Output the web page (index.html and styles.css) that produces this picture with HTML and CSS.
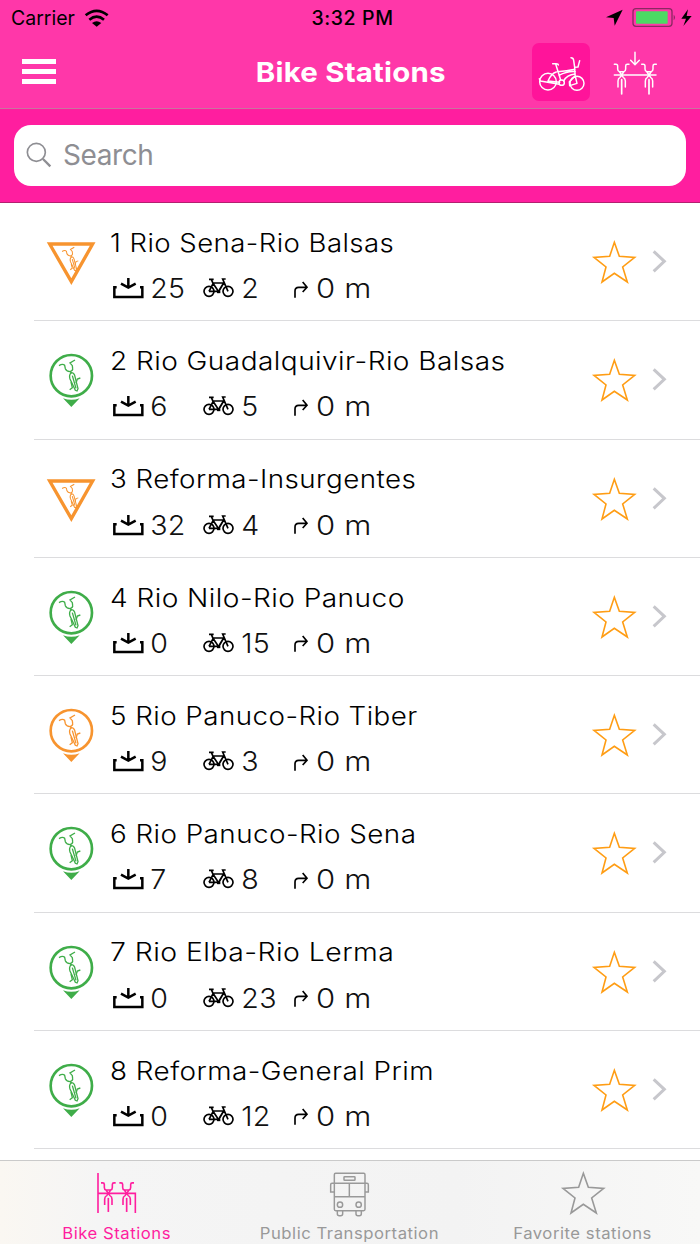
FILE: index.html
```
<!DOCTYPE html>
<html lang="en">
<head>
<meta charset="utf-8">
<title>Bike Stations</title>
<link rel="stylesheet" href="styles.css">
</head>
<body>
<svg class="sprites" aria-hidden="true">
  <symbol id="pin" viewBox="21 33 144 174">
    <circle cx="94" cy="107" r="62" stroke-width="8"/>
    <path class="solid" d="M69 175Q94 184 119 175L94 201Z"/>
    <use href="#pinbike"/>
  </symbol>
  <symbol id="tri" viewBox="21 33 144 174">
    <path d="M29 66H158L94 179Z" stroke-width="10"/>
    <use href="#pinbike" transform="translate(23 30) scale(.76)"/>
  </symbol>
  <g id="pinbike" stroke-width="4">
    <path d="M57 77Q68 70 74 76L76 86Q79 93 90 95Q99 92 98 86L97 77L90 69L105 60M91 94L94 100"/>
    <path d="M94 98Q86 104 90 117L106 151L111 153L114 146L104 106Q101 98 94 98Z"/>
    <path stroke-width="4" d="M97 107L108 145M93 126L97 143L89 149M108 129L112 117L121 114"/>
  </g>
  <symbol id="dock" viewBox="216 153 102 66">
    <path d="M230 184H223V213H307V184H300M265 156V184M243 173L265 185L287 173" stroke-width="7.5"/>
  </symbol>
  <symbol id="bike" viewBox="486 156 99 66">
    <g stroke-width="5"><circle cx="507" cy="199" r="15"/><circle cx="564" cy="199" r="15"/>
    <path d="M507 199L520 174H551L536 200L519 175L514 163M507 163H521M507 199H536M564 199L548 162H557M551 174L538 195"/><path d="M531 201H541" stroke-width="7"/></g>
  </symbol>
  <symbol id="turn" viewBox="276 162 51 57">
    <path d="M285 215V195Q285 184 296 184H320M308 168L321 184L308 198" stroke-width="5"/>
  </symbol>
  <symbol id="star" viewBox="36 30 135 135">
    <path d="M103 37L118 79L164 82L128 111L142 156L103 130L66 156L78 111L42 82L89 79Z" stroke-width="4.8"/>
  </symbol>
  <symbol id="chev" viewBox="216 60 45 69"><path d="M221 64L253 94L221 124" stroke-width="9"/></symbol>
  <g id="rackbike">
    <path d="M-22-32H-17Q-12-32-12-27V-18Q-12-12-7-10L0 0L7-10Q12-12 12-18V-27Q12-32 17-32H22M-7-10H7M-11 36V18Q-11 10-5 7L0 0L5 7Q11 10 11 18V36"/>
    <path d="M0 14V57" stroke-width="5"/>
  </g>
</svg>

<header>
  <div class="status">
    <span class="carrier">Carrier</span>
    <svg class="wifi" viewBox="252 24 75 54"><g stroke="#000" stroke-width="8" fill="none"><path d="M257 43Q290 16 323 43M268 56Q290 38 312 56"/></g><path d="M276 66Q290 56 304 66L290 77Z"/></svg>
    <span class="clock">3:32 PM</span>
    <svg class="power" viewBox="764 20 264 60">
      <path d="M817 28L767 51L790 53L793 76Z"/>
      <rect x="848" y="25" width="117" height="53" rx="9" fill="none" stroke="#8b2862" stroke-width="4"/>
      <rect x="857" y="33" width="95" height="37" rx="2" fill="#4cd964"/>
      <path d="M970 43Q978 51 970 60Z" fill="#8b2862"/>
      <path d="M1013 27L993 55H1007L999 77L1024 47H1009Z"/>
    </svg>
  </div>
  <div class="nav">
    <div class="burger"><i></i><i></i><i></i></div>
    <h1><span>Bike Stations</span></h1>
    <div class="toggle on"><svg viewBox="36 21 174 174"><g stroke-width="4.4">
      <circle cx="84" cy="137" r="25"/><circle cx="171" cy="142" r="21"/><circle cx="125" cy="140" r="8"/>
      <path d="M98 83H108Q115 83 115 87M107 84L122 132M113 107Q140 105 165 100M117 118Q142 105 166 107M109 108Q94 112 84 135L119 139M61 135L58 128M61 135L118 145M131 135Q140 116 166 114M153 65Q160 65 161 73L164 94L174 93L179 74M164 94L165 117L171 142L149 149L148 137L166 120"/></g></svg></div>
    <div class="toggle"><svg viewBox="258 21 174 174"><g stroke-width="4.4"><path d="M345 49V85M332 73L345 86L358 73M283 117H408"/><use href="#rackbike" x="305" y="117"/><use href="#rackbike" x="387" y="117"/></g></svg></div>
  </div>
</header>

<div class="searchbar"><div class="field"><svg viewBox="78 126 78 78"><circle cx="109" cy="157" r="27" stroke-width="5"/><path d="M129 177L151 199" stroke-width="7"/></svg><span>Search</span></div></div>

<main>
  <section class="row"><svg class="mark orange"><use href="#tri"/></svg><div class="info"><h2 class="n1">1 Rio Sena-Rio Balsas</h2><div class="stats"><svg class="dock"><use href="#dock"/></svg><b class="free">25</b><svg class="bike"><use href="#bike"/></svg><b class="bikes">2</b><svg class="turn"><use href="#turn"/></svg><b class="dist">0 m</b></div></div><svg class="star"><use href="#star"/></svg><svg class="chev"><use href="#chev"/></svg></section>
  <section class="row"><svg class="mark green"><use href="#pin"/></svg><div class="info"><h2 class="n2">2 Rio Guadalquivir-Rio Balsas</h2><div class="stats"><svg class="dock"><use href="#dock"/></svg><b class="free">6</b><svg class="bike"><use href="#bike"/></svg><b class="bikes">5</b><svg class="turn"><use href="#turn"/></svg><b class="dist">0 m</b></div></div><svg class="star"><use href="#star"/></svg><svg class="chev"><use href="#chev"/></svg></section>
  <section class="row"><svg class="mark orange"><use href="#tri"/></svg><div class="info"><h2 class="n3">3 Reforma-Insurgentes</h2><div class="stats"><svg class="dock"><use href="#dock"/></svg><b class="free">32</b><svg class="bike"><use href="#bike"/></svg><b class="bikes">4</b><svg class="turn"><use href="#turn"/></svg><b class="dist">0 m</b></div></div><svg class="star"><use href="#star"/></svg><svg class="chev"><use href="#chev"/></svg></section>
  <section class="row"><svg class="mark green"><use href="#pin"/></svg><div class="info"><h2 class="n4">4 Rio Nilo-Rio Panuco</h2><div class="stats"><svg class="dock"><use href="#dock"/></svg><b class="free">0</b><svg class="bike"><use href="#bike"/></svg><b class="bikes">15</b><svg class="turn"><use href="#turn"/></svg><b class="dist">0 m</b></div></div><svg class="star"><use href="#star"/></svg><svg class="chev"><use href="#chev"/></svg></section>
  <section class="row"><svg class="mark orange"><use href="#pin"/></svg><div class="info"><h2 class="n5">5 Rio Panuco-Rio Tiber</h2><div class="stats"><svg class="dock"><use href="#dock"/></svg><b class="free">9</b><svg class="bike"><use href="#bike"/></svg><b class="bikes">3</b><svg class="turn"><use href="#turn"/></svg><b class="dist">0 m</b></div></div><svg class="star"><use href="#star"/></svg><svg class="chev"><use href="#chev"/></svg></section>
  <section class="row"><svg class="mark green"><use href="#pin"/></svg><div class="info"><h2 class="n6">6 Rio Panuco-Rio Sena</h2><div class="stats"><svg class="dock"><use href="#dock"/></svg><b class="free">7</b><svg class="bike"><use href="#bike"/></svg><b class="bikes">8</b><svg class="turn"><use href="#turn"/></svg><b class="dist">0 m</b></div></div><svg class="star"><use href="#star"/></svg><svg class="chev"><use href="#chev"/></svg></section>
  <section class="row"><svg class="mark green"><use href="#pin"/></svg><div class="info"><h2 class="n7">7 Rio Elba-Rio Lerma</h2><div class="stats"><svg class="dock"><use href="#dock"/></svg><b class="free">0</b><svg class="bike"><use href="#bike"/></svg><b class="bikes">23</b><svg class="turn"><use href="#turn"/></svg><b class="dist">0 m</b></div></div><svg class="star"><use href="#star"/></svg><svg class="chev"><use href="#chev"/></svg></section>
  <section class="row"><svg class="mark green"><use href="#pin"/></svg><div class="info"><h2 class="n8">8 Reforma-General Prim</h2><div class="stats"><svg class="dock"><use href="#dock"/></svg><b class="free">0</b><svg class="bike"><use href="#bike"/></svg><b class="bikes">12</b><svg class="turn"><use href="#turn"/></svg><b class="dist">0 m</b></div></div><svg class="star"><use href="#star"/></svg><svg class="chev"><use href="#chev"/></svg></section>
</main>

<footer>
  <div class="tab active"><svg viewBox="162 30 135 135"><g stroke-width="4.8"><path d="M174 36V156M174 97H286V156"/><use href="#rackbike" transform="translate(205 97) scale(1 .98)"/><use href="#rackbike" transform="translate(260 97) scale(1 .98)"/></g></svg><span>Bike Stations</span></div>
  <div class="tab mid"><svg viewBox="232 90 135 135"><g stroke-width="4.4"><rect x="254" y="97" width="92" height="112" rx="4"/><rect x="283" y="107" width="33" height="11" rx="2"/><path d="M254 127H346M254 167H346M299 127V167M254 127H247Q243 127 243 131V153H254M346 127H352Q356 127 356 131V153H346M263 209V218Q263 224 269 224H273Q279 224 279 218V209M319 209V218Q319 224 325 224H329Q335 224 335 218V209"/><circle cx="271" cy="191" r="8"/><circle cx="327" cy="191" r="8"/></g></svg><span>Public Transportation</span></div>
  <div class="tab"><svg class="favstar"><use href="#star"/></svg><span>Favorite stations</span></div>
</footer>
</body>
</html>
```
FILE: styles.css
```
* { box-sizing: border-box; }
body { margin: 0; width: 700px; height: 1244px; overflow: hidden; background: #fff; font-family: Inter, "Liberation Sans", sans-serif; display: flex; flex-direction: column; }
svg { display: block; flex: none; overflow: visible; }
symbol { overflow: visible; }
.sprites { position: absolute; width: 0; height: 0; }
h1, h2, b { margin: 0; font-weight: normal; }

header { height: 109px; flex: none; background: #ff37a9; border-bottom: 1px solid #ca749f; }
.status { height: 36px; display: grid; grid-template-columns: 74px 1fr 140px 1fr 88px; padding: 0 8px 0 11px; align-items: center; font-size: 19.5px; color: #000; }
.carrier { letter-spacing: 0; }
.wifi { width: 25px; height: 18px; margin: -1px 0 0 -1px; }
.clock { font-weight: 500; white-space: nowrap; text-align: center; letter-spacing: .6px; margin: 0 -8px 0 8px; }
.power { width: 88px; height: 20px; grid-column: 5; margin: -2px 0 0 1px; }
.nav { height: 72px; display: flex; align-items: center; padding: 0 36px 0 22px; }
.burger { width: 34px; flex: none; display: flex; flex-direction: column; gap: 5px; margin-top: -1px; }
.burger i { height: 5px; background: #fff; }
.nav h1 { flex: 1; text-align: center; padding-left: 113px; margin-top: -1px; font-size: 27.5px; font-weight: 700; color: #fff; white-space: nowrap; letter-spacing: .2px; }
h1 span { display: inline-block; transform: scaleX(1.07); }
.toggle { width: 58px; height: 58px; border-radius: 7px; flex: none; margin-top: -1px; }
.toggle svg { width: 58px; height: 58px; fill: none; stroke: #fff; stroke-linecap: round; stroke-linejoin: round; }
.on { background: #ff149a; margin-right: 16px; }

.searchbar { height: 94px; flex: none; background: #ff1e9f; border-bottom: 1px solid #b3206f; padding: 16px 14px 0; }
.field { height: 61px; border-radius: 17px; background: #fff; display: flex; align-items: center; gap: 11px; padding: 0 0 2px 12px; color: #8e8e93; font-size: 28px; letter-spacing: -.4px; }
.field svg { width: 26px; height: 26px; margin-top: 1px; fill: none; stroke: currentColor; }

main { height: 957px; flex: none; overflow: hidden; padding-left: 34px; }
.row { height: 118.25px; border-bottom: 1px solid #dcdcde; display: flex; align-items: flex-start; }
.row svg { fill: none; stroke: currentColor; }
.row svg.mark { width: 48px; height: 58px; margin: 30px 0 0 13px; }
.mark .solid, .solid { fill: currentColor; stroke: none; }
.orange { color: #f7942f; }
.green { color: #3fad49; }
.info { width: 482px; margin-left: 15px; padding-top: 23.75px; color: #000; }
h2 { width: max-content; font-size: 25px; line-height: 32px; font-weight: 340; letter-spacing: .4px; white-space: nowrap; transform-origin: 0 50%; }
.n1 { transform: scaleX(1.103); }
.n2 { transform: scaleX(1.121); }
.n3 { transform: scaleX(1.11); }
.n4 { transform: scaleX(1.122); }
.n5 { transform: scaleX(1.111); }
.n6 { transform: scaleX(1.113); }
.n7 { transform: scaleX(1.135); }
.n8 { transform: scaleX(1.115); }
.stats { display: flex; height: 36px; margin-top: 11.75px; align-items: center; font-size: 27px; }
.stats b { flex: none; font-weight: 320; color: #111; letter-spacing: .2px; white-space: nowrap; transform-origin: 0 50%; }
.dock { width: 34px; height: 22px; margin: -1px 0 0 2px; }
.stats .free { width: 48px; padding-left: 4px; transform: scaleX(1.06); }
.bike { width: 33px; height: 22px; margin: -1px 0 0 8px; }
.stats .bikes { width: 57px; padding-left: 6px; transform: scaleX(1.06); }
.turn { width: 17px; height: 19px; margin-top: 1px; }
.stats .dist { padding-left: 6px; transform: scaleX(1.15); }
.star { width: 45px; height: 45px; margin-top: 37px; color: #ff9d14; }
.chev { width: 15px; height: 23px; margin: 47px 0 0 15px; color: #c7c7cc; }

footer { height: 84px; margin-top: -.5px; flex: none; border-top: 1px solid #cacaca; background: linear-gradient(90deg, #faf7f2 0, #f5f5f5 14%, #f3f3f3 65%, #f8f8f7); display: grid; grid-template-columns: 233px 233px 234px; color: #999; }
.tab { display: flex; flex-direction: column; align-items: center; font-size: 15.5px; letter-spacing: .5px; white-space: nowrap; }
.tab svg { width: 45px; height: 45px; margin-top: 10px; fill: none; stroke: currentColor; }
.tab span { line-height: 20px; margin-top: 8px; transform: scaleX(1.075); }
.active { color: #ff1e9f; }
```
